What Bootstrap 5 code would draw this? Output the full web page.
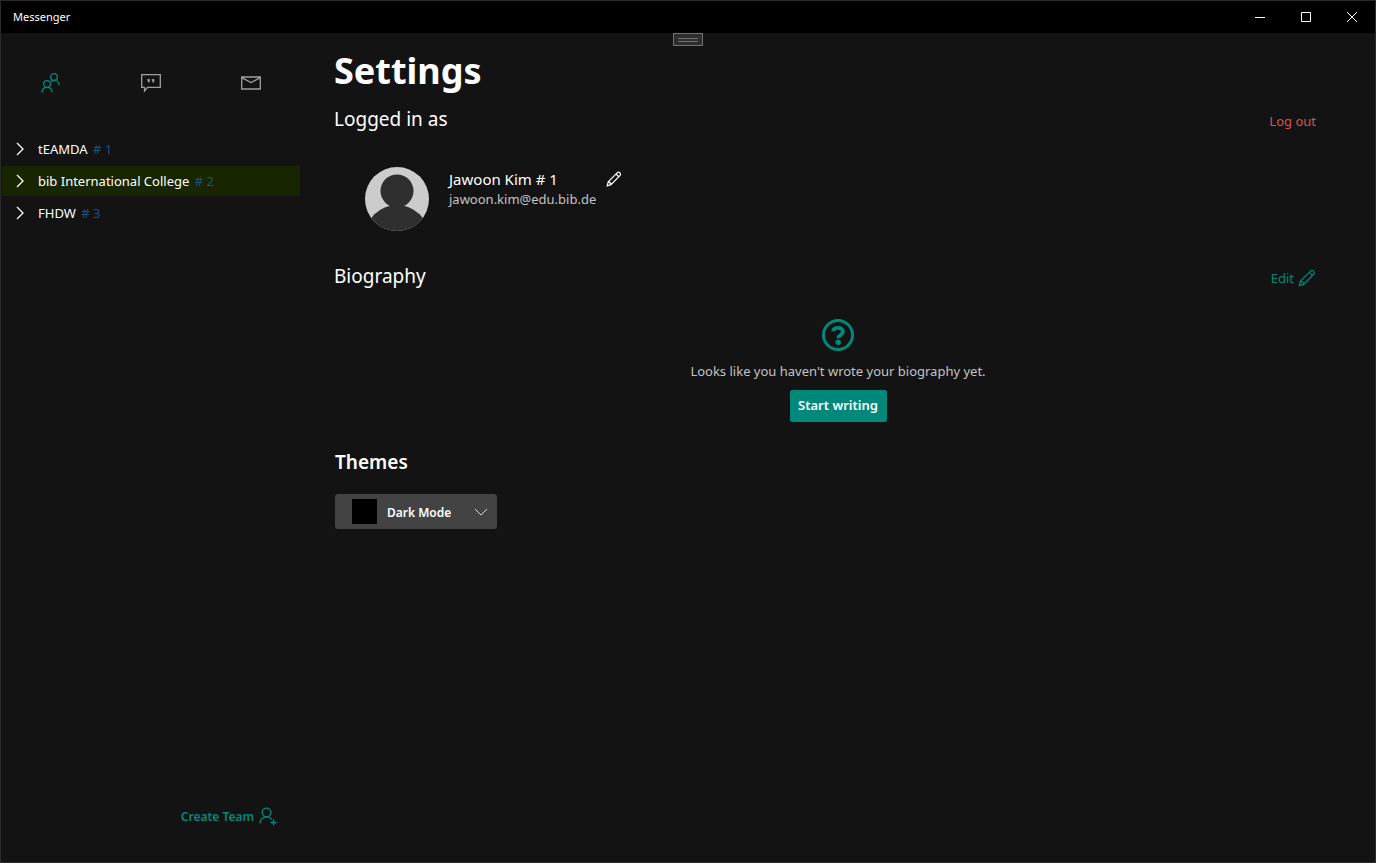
<!DOCTYPE html>
<html lang="en">
<head>
<meta charset="utf-8">
<meta name="viewport" content="width=device-width, initial-scale=1">
<title>Messenger</title>
<link href="https://cdn.jsdelivr.net/npm/bootstrap@5.3.0/dist/css/bootstrap.min.css" rel="stylesheet">
<style>
  :root { --accent: #00897b; --page: #131313; }
  body { font-family: "Noto Sans", "Open Sans", sans-serif; font-size: 13px; line-height: 20px; color: #fff; background: var(--page); }
  svg { display: block; fill: none; stroke: currentColor; }
  .window { border: 1px solid #2b2b2b; }
  .titlebar { height: 32px; background: #000; font-size: 11px; }
  .caption-btn { width: 46px; height: 32px; }
  .plain { background: none; border: 0; padding: 0; color: inherit; }
  .grip { left: 50%; top: 32px; width: 30px; height: 13px; transform: translateX(-50%); background: #2d2d2d; border: 1px solid #707070; padding: 4px; }
  .grip i { height: 4px; border: solid #707070; border-width: 1px 0; }
  .sidebar { width: 300px; }
  .tabs { height: 99px; margin-bottom: 2px; }
  .tabs a { color: #a0a0a0; }
  .tabs a.active { color: var(--accent); }
  .team { height: 30px; margin: 0 1px 2px; padding-left: 13px; gap: 13px; color: #fff; text-decoration: none; }
  .team.selected { background: #172600; }
  .team .tag { color: #19528a; margin-left: 2px; }
  .accent { color: var(--accent); }
  .create { font-size: 12px; font-weight: 600; margin: 0 24px 35px 0; gap: 5px; }
  .inset { padding: 0 59px 0 33px; }
  h1 { font-size: 36px; line-height: 48px; font-weight: 700; margin: 14px 0 10px; }
  h2 { font-size: 19px; line-height: 28px; font-weight: 400; margin: 0; }
  .row-action { padding-top: 4px; }
  .logout { color: #d9534f; }
  .profile { padding-left: 31px; margin-top: 34px; gap: 20px; }
  .person { font-size: 15px; gap: 48px; margin-top: 2px; }
  .email { color: #c4c4c4; }
  .bio-head { margin-top: 31px; }
  .empty { margin-top: 29px; color: #c4c4c4; }
  .empty p { margin: 10px 0 9px; }
  .start { --bs-btn-bg: #00897b; --bs-btn-border-color: #00897b; --bs-btn-color: #fff; --bs-btn-hover-bg: #00796b; --bs-btn-hover-color: #fff; --bs-btn-border-radius: 2px; width: 97px; height: 32px; padding: 0; font-size: 13px; font-weight: 600; }
  .themes { margin-top: 26px; padding-left: 34px; }
  .themes label { font-size: 19px; line-height: 28px; font-weight: 600; }
  .picker { width: 162px; margin-top: 18px; }
  .picker select { height: 35px; padding: 2px 30px 0 52px; font-size: 12px; font-weight: 600; color: #fff; background-color: #434343; border: 0; border-radius: 3px;
    background-position: right 9px center; background-size: 14px 14px;
    background-image: url("data:image/svg+xml,%3Csvg xmlns='http://www.w3.org/2000/svg' viewBox='0 0 14 14'%3E%3Cpath d='M1 4l6 6 6-6' fill='none' stroke='%23ddd'/%3E%3C/svg%3E"); }
  .swatch { left: 17px; top: 5px; width: 25px; height: 25px; background: #000; pointer-events: none; }
</style>
</head>
<body>
<div class="window position-relative d-flex flex-column min-vh-100">
  <header class="titlebar d-flex align-items-center justify-content-between">
    <span class="ps-2 ms-1">Messenger</span>
    <div class="d-flex">
      <button class="plain caption-btn d-flex align-items-center justify-content-center" aria-label="Minimize"><svg width="10" height="10"><path d="M0 5.500h10"/></svg></button>
      <button class="plain caption-btn d-flex align-items-center justify-content-center" aria-label="Maximize"><svg width="10" height="10"><path d="M.5.5h9v9h-9z"/></svg></button>
      <button class="plain caption-btn d-flex align-items-center justify-content-center" aria-label="Close"><svg width="10" height="10"><path d="M0 0l10 10M10 0L0 10"/></svg></button>
    </div>
  </header>
  <div class="grip position-absolute"><i class="d-block"></i></div>

  <div class="d-flex flex-grow-1">
    <aside class="sidebar d-flex flex-column flex-shrink-0">
      <nav class="tabs d-flex align-items-center">
        <a href="#" class="active flex-fill d-flex justify-content-center" aria-label="Teams">
          <svg width="20" height="20" viewBox="0 0 20 20" stroke-width="1.300"><circle cx="13" cy="4" r="3.400"/><circle cx="6" cy="11" r="3.400"/><path d="M1 19.500c0-3 2-5.100 5-5.100s5 2.100 5 5.100M9.600 8.800c.9-.9 2-1.400 3.400-1.400 3 0 5 2.100 5 4.600"/></svg>
        </a>
        <a href="#" class="flex-fill d-flex justify-content-center" aria-label="Chat">
          <svg width="20" height="20" viewBox="0 0 20 20" stroke-width="1.300"><path d="M.7 1.700h18.600v12.600H6.500L3.500 18v-3.700H.7z"/><path d="M6.500 6.500h2V8l-.8 1.500zM11 6.500h2V8l-.8 1.500z" fill="currentColor" stroke-width=".8"/></svg>
        </a>
        <a href="#" class="flex-fill d-flex justify-content-center" aria-label="Mail">
          <svg width="20" height="20" viewBox="0 0 20 20" stroke-width="1.300"><path d="M.7 4h18.600v12H.7zM.7 4.700L10 9.500l9.300-4.800"/></svg>
        </a>
      </nav>
      <a href="#" class="team d-flex align-items-center"><svg width="10" height="14" stroke-width="1.300"><path d="M2 1l6 6-6 6"/></svg><span>tEAMDA <span class="tag"># 1</span></span></a>
      <a href="#" class="team selected d-flex align-items-center"><svg width="10" height="14" stroke-width="1.300"><path d="M2 1l6 6-6 6"/></svg><span>bib International College <span class="tag"># 2</span></span></a>
      <a href="#" class="team d-flex align-items-center"><svg width="10" height="14" stroke-width="1.300"><path d="M2 1l6 6-6 6"/></svg><span>FHDW <span class="tag"># 3</span></span></a>
      <button class="plain accent create d-flex align-items-center mt-auto align-self-end">Create Team
        <svg width="18" height="20" viewBox="0 0 18 20" stroke-width="1.300"><circle cx="7.500" cy="5.500" r="4.300"/><path d="M1 16.500c0-4 2.500-6.700 6.500-6.700 2.500 0 4.300 1 5.400 2.700M14.500 12.500v6M11.500 15.500h6"/></svg>
      </button>
    </aside>

    <main class="flex-grow-1">
      <div class="inset">
        <h1>Settings</h1>
        <div class="d-flex justify-content-between align-items-center">
          <h2>Logged in as</h2>
          <button class="plain row-action logout">Log out</button>
        </div>
        <div class="profile d-flex">
          <svg width="64" height="64" viewBox="0 0 64 64"><defs><clipPath id="face"><circle cx="32" cy="32" r="32"/></clipPath></defs><g clip-path="url(#face)" stroke="none"><path fill="#ccc" d="M0 0h64v64H0z"/><circle cx="32" cy="70" r="32" fill="#2f2f2f"/><circle cx="32" cy="24" r="16.500" fill="#2f2f2f"/></g></svg>
          <div>
            <div class="person d-flex align-items-center">
              <span>Jawoon Kim # 1</span>
              <button class="plain" aria-label="Edit name"><svg width="16" height="16" viewBox="0 0 16 16" stroke-width="1.200"><path d="M1.200 14.800l1-4 8.900-8.900c.8-.8 2-.8 2.800 0s.8 2 0 2.800l-8.900 9zM10 3l2.900 2.900M2.200 10.800c1.500.2 2.600 1.400 2.800 2.900"/></svg></button>
            </div>
            <div class="email">jawoon.kim@edu.bib.de</div>
          </div>
        </div>
        <div class="bio-head d-flex justify-content-between align-items-center">
          <h2>Biography</h2>
          <button class="plain row-action accent d-flex align-items-center gap-1">Edit
            <svg width="18" height="18" viewBox="0 0 16 16" stroke-width="1.100"><path d="M1.200 14.800l1-4 8.900-8.900c.8-.8 2-.8 2.800 0s.8 2 0 2.800l-8.900 9zM10 3l2.900 2.900M2.200 10.800c1.500.2 2.600 1.400 2.800 2.900"/></svg>
          </button>
        </div>
      </div>

      <div class="empty d-flex flex-column align-items-center">
        <svg class="accent" width="32" height="32" viewBox="0 0 32 32"><circle cx="16" cy="16" r="14.500" stroke-width="3"/><path stroke-width="3.800" d="M10.800 12c.8-2 2.600-3.200 5-3.200 3 0 5.200 1.500 5.200 3.900 0 3.200-4.700 2.900-4.700 6.600"/><circle cx="16.200" cy="23.300" r="2.700" fill="currentColor" stroke="none"/></svg>
        <p>Looks like you haven't wrote your biography yet.</p>
        <button class="btn start">Start writing</button>
      </div>

      <div class="inset themes">
        <label for="theme">Themes</label>
        <div class="picker position-relative">
          <select id="theme" class="form-select"><option>Dark Mode</option><option>Light Mode</option></select>
          <span class="swatch position-absolute"></span>
        </div>
      </div>
    </main>
  </div>
</div>
<script src="https://cdn.jsdelivr.net/npm/bootstrap@5.3.0/dist/js/bootstrap.bundle.min.js"></script>
</body>
</html>
